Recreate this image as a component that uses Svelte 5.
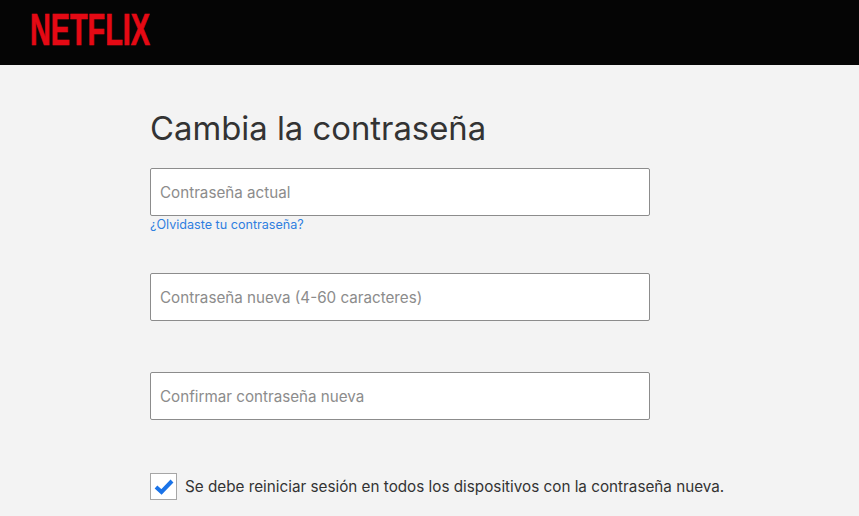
<script>
  let current = '';
  let next = '';
  let confirm = '';
  let signOut = true;
</script>

<header class="top">
  <svg class="logo" width="200" height="44" viewBox="0 0 200 44" role="img" aria-label="Netflix">
    <text x="0" y="32" textLength="120" lengthAdjust="spacingAndGlyphs">NETFLIX</text>
  </svg>
</header>

<main class="content">
  <h1>Cambia la contraseña</h1>

  <div class="field first">
    <input type="password" bind:value={current} placeholder="Contraseña actual" />
    <a href="#forgot">¿Olvidaste tu contraseña?</a>
  </div>

  <div class="field second">
    <input type="password" bind:value={next} placeholder="Contraseña nueva (4-60 caracteres)" />
  </div>

  <div class="field third">
    <input type="password" bind:value={confirm} placeholder="Confirmar contraseña nueva" />
  </div>

  <label class="check">
    <input type="checkbox" bind:checked={signOut} />
    <span class="box">
      {#if signOut}
        <svg width="20" height="16" viewBox="0 0 20 16">
          <path d="M2 8 L7.5 13 L18 2" fill="none" stroke="#1a73e8" stroke-width="4" />
        </svg>
      {/if}
    </span>
    <span>Se debe reiniciar sesión en todos los dispositivos con la contraseña nueva.</span>
  </label>
</main>

<style>
  :global(body) {
    background: #f3f3f3;
    font-family: Inter, "Liberation Sans", sans-serif;
    overflow: hidden;
  }

  .top {
    height: 65px;
    box-sizing: border-box;
    background: #050505;
    padding: 13px 0 0 30px;
    overflow: hidden;
  }

  .logo {
    display: block;
  }

  .logo text {
    font-family: "Liberation Sans", sans-serif;
    font-weight: bold;
    font-size: 44px;
    fill: #e50914;
    stroke: #e50914;
    stroke-width: 0.7px;
  }

  .content {
    padding: 41px 0 0 150px;
    width: 600px;
  }

  h1 {
    margin: 0;
    font-size: 32.85px;
    font-weight: 400;
    line-height: 44px;
    color: #333;
  }

  .field input {
    display: block;
    width: 500px;
    height: 48px;
    box-sizing: border-box;
    border: 1px solid #8c8c8c;
    border-radius: 2px;
    background: #fff;
    padding: 0 9px;
    font-family: inherit;
    font-size: 15.2px;
  }

  .field input::placeholder {
    color: #8c8c8c;
    opacity: 1;
  }

  .first {
    margin-top: 18px;
  }

  .first a {
    display: block;
    margin-top: 1px;
    font-size: 12.6px;
    line-height: 16px;
    color: #2f7fe0;
    text-decoration: none;
  }

  .second {
    margin-top: 40px;
  }

  .third {
    margin-top: 51px;
  }

  .check {
    display: flex;
    align-items: center;
    gap: 8px;
    margin-top: 53px;
    width: 640px;
    font-size: 15.25px;
    color: #333;
    white-space: nowrap;
  }

  .check input {
    display: none;
  }

  .box {
    width: 27px;
    height: 27px;
    box-sizing: border-box;
    flex: none;
    border: 1px solid #a6a6a6;
    background: #fff;
    display: flex;
    align-items: center;
    justify-content: center;
  }
</style>
